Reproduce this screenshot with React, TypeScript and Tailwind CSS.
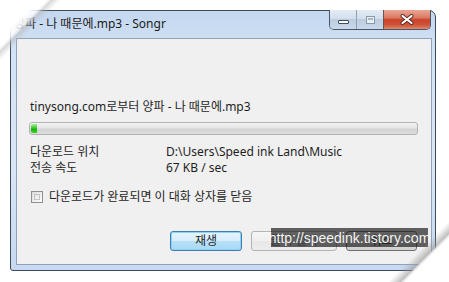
import React from "react";

const ui = "font-['Noto_Sans','Noto_Sans_CJK_KR',sans-serif]";

function CloseX() {
  return (
    <svg width="14" height="11" viewBox="0 0 14 11">
      <path d="M2.5 2 L11.5 9 M11.5 2 L2.5 9" stroke="#5a2a22" strokeWidth="4" strokeLinecap="round" />
      <path d="M2.5 2 L11.5 9 M11.5 2 L2.5 9" stroke="#ffffff" strokeWidth="2.2" strokeLinecap="round" />
    </svg>
  );
}

export default function App() {
  return (
    <div className={`relative w-[449px] h-[282px] overflow-hidden bg-white ${ui}`}>
      <div className="pl-[10px] pt-[10px]">
        {/* window */}
        <div className="w-[426px] h-[261px] rounded-t-[7px] rounded-b-[3px] border border-[#3f4a57] bg-[linear-gradient(180deg,#c3d7ef_0%,#d3e2f5_15%,#d9e6f6_60%,#c6d9f0_100%)] flex flex-col">
          {/* title bar */}
          <div className="h-[27px] flex items-start justify-between">
            <div className="pt-[5px] pl-[3px] text-[12px] leading-[16px] text-[#1b1b1b] whitespace-nowrap">양파 - 나 때문에.mp3 - Songr</div>
            <div className="mt-[-1px] mr-[4px] flex h-[20px] rounded-b-[5px] border border-t-0 border-[#4a5766] overflow-hidden">
              <div className="w-[27px] h-full flex items-center justify-center border-r border-[#8f9fb2] bg-[linear-gradient(180deg,#e4ecf5_0%,#d3dfec_45%,#bccde0_50%,#c9d8ea_100%)]">
                <div className="mt-[5px] w-[11px] h-[4px] bg-white border border-[#3d4a5a] rounded-[1px]" />
              </div>
              <div className="w-[27px] h-full flex items-center justify-center border-r border-[#6b5450] bg-[linear-gradient(180deg,#e4ecf5_0%,#d3dfec_45%,#bccde0_50%,#c9d8ea_100%)]">
                <div className="w-[9px] h-[8px] border border-[#8a98a9] bg-[#e8eef5] flex items-start justify-center">
                  <div className="w-[5px] h-[2px] mt-[1px] bg-[#a9b6c5]" />
                </div>
              </div>
              <div className="w-[46px] h-full flex items-center justify-center bg-[linear-gradient(180deg,#e9a796_0%,#dc7a63_40%,#c9432a_52%,#d0553b_80%,#e08a6e_100%)]">
                <CloseX />
              </div>
            </div>
          </div>
          {/* client area */}
          <div className="ml-[5px] mr-[3px] h-[227px] border border-[#8fa2ba] bg-[#f0f0f0] flex flex-col pl-[13px]">
            <div className="pt-[60px] text-[12px] leading-[16px] text-[#1e1e1e] whitespace-nowrap">tinysong.com로부터 양파 - 나 때문에.mp3</div>
            <div className="mt-[7px] ml-[-1px] w-[389px] h-[13px] rounded-[3px] border border-[#b2b2b2] bg-[linear-gradient(180deg,#f3f3f3_0%,#e6e6e6_45%,#d3d3d3_55%,#dcdcdc_100%)] p-[1px] flex">
              <div className="w-[6px] h-full rounded-l-[2px] bg-[linear-gradient(180deg,#9cf08e_0%,#3ccb2c_45%,#15b10a_55%,#3dd32e_100%)]" />
            </div>
            <div className="mt-[9px] flex flex-col text-[12px] leading-[16px] text-[#1e1e1e]">
              <div className="flex"><span className="w-[136px]">다운로드 위치</span><span>D:\Users\Speed ink Land\Music</span></div>
              <div className="flex"><span className="w-[136px]">전송 속도</span><span>67 KB / sec</span></div>
            </div>
            <div className="mt-[13px] flex items-center text-[12px] leading-[16px] text-[#1e1e1e]">
              <div className="ml-[1px] w-[12px] h-[12px] border border-[#8e8f8f] bg-[linear-gradient(135deg,#dcdcdc,#ffffff)] p-[2px]">
                <div className="w-full h-full border border-[#c5c5c5] bg-[linear-gradient(135deg,#e4e4e4,#f7f7f7)]" />
              </div>
              <span className="ml-[6px]">다운로드가 완료되면 이 대화 상자를 닫음</span>
            </div>
            <div className="mt-[26px] flex justify-end pr-[14px] gap-[9px] text-[12px]">
              <div className="w-[72px] h-[20px] rounded-[3px] border border-[#3c7fb1] bg-[linear-gradient(180deg,#e5f4fc_0%,#d6eefb_48%,#b8e0f7_52%,#a8d8f5_100%)] shadow-[inset_0_0_0_1px_#8fd2f5] flex items-center justify-center text-[#1e1e1e]">재생</div>
              <div className="w-[86px] h-[20px] rounded-[3px] border border-[#b0b4b8] bg-[linear-gradient(180deg,#f6f6f6_0%,#efefef_50%,#e8e8e8_52%,#ececec_100%)] flex items-center justify-center text-[#8d8d8d]">폴더 열기</div>
              <div className="w-[71px] h-[20px] rounded-[3px] border border-[#707070] bg-[linear-gradient(180deg,#f2f2f2_0%,#ebebeb_48%,#dddddd_52%,#cfcfcf_100%)] flex items-center justify-center text-[#1e1e1e]">취소</div>
            </div>
          </div>
        </div>
      </div>

      {/* watermark */}
      <div className="absolute left-[271px] top-[228px] w-[157px] h-[19px] bg-[rgba(20,20,20,0.66)] flex items-center justify-center font-['Liberation_Sans',sans-serif] text-[14px] text-[#f4f4f4] leading-none">
        http://speedink.tistory.com
      </div>

      {/* page curls */}
      <div className="absolute left-0 top-0 w-[70px] h-[70px] bg-[linear-gradient(135deg,#ffffff_0px,#ffffff_27px,rgba(255,255,255,0.8)_33px,rgba(235,235,235,0.75)_35px,rgba(185,185,185,0.55)_36.5px,rgba(220,220,220,0)_43px)]" />
      <div className="absolute right-0 bottom-0 w-[70px] h-[70px] bg-[linear-gradient(315deg,#ffffff_0px,#ffffff_31px,#e9e9e9_33px,rgba(150,150,150,0.6)_34.5px,rgba(200,200,200,0)_43px)]" />
    </div>
  );
}
